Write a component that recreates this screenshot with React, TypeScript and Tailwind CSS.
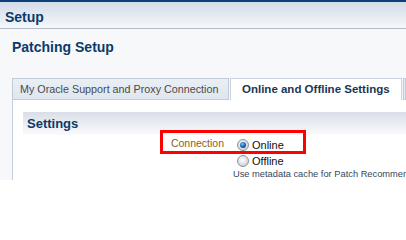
import React from 'react';

const Radio: React.FC<{ checked?: boolean }> = ({ checked }) => (
  <svg width="12" height="12" viewBox="0 0 12 12" className="shrink-0">
    <defs>
      <radialGradient id={checked ? 'rOn' : 'rOff'} cx="45%" cy="40%" r="60%">
        <stop offset="0%" stopColor="#ffffff" />
        <stop offset="100%" stopColor="#c9ced6" />
      </radialGradient>
      <radialGradient id="dot" cx="40%" cy="35%" r="70%">
        <stop offset="0%" stopColor="#7fc4ef" />
        <stop offset="60%" stopColor="#1b6fb3" />
        <stop offset="100%" stopColor="#0b3d70" />
      </radialGradient>
    </defs>
    <circle cx="6" cy="6" r="5.5" fill={checked ? 'url(#rOn)' : 'url(#rOff)'} stroke="#8d949e" strokeWidth="1" />
    {checked && <circle cx="6" cy="6" r="3" fill="url(#dot)" />}
  </svg>
);

const App: React.FC = () => {
  return (
    <div
      className="relative w-[406px] h-[216px] overflow-hidden bg-white"
      style={{ fontFamily: '"Liberation Sans", Arial, sans-serif' }}
    >
      {/* page header */}
      <div className="h-[29px] border-t-2 border-t-[#0d3f7a] border-b border-b-[#b4bdca] bg-gradient-to-b from-[#d3dce9] to-[#f5f7fa] pl-[5px] pt-[5px] text-[14px] leading-[21px] font-bold text-[#0c3a6a]">
        Setup
      </div>

      <div className="h-[151px] bg-[#f7f8fa] pt-[8px]">
        <div className="pl-[12px] text-[14px] leading-[20px] font-bold text-[#0c3a6a]">Patching Setup</div>

        {/* tabs */}
        <div className="mt-[21px] flex h-[22px] pl-[12px] whitespace-nowrap">
          <div className="w-[217px] shrink-0 border border-[#c2ccd9] bg-gradient-to-b from-[#eaeff5] to-[#dfe6ef] pl-[7px] text-[10.75px] leading-[20px] text-[#4a4a4a]">
            My Oracle Support and Proxy Connection
          </div>
          <div className="ml-px w-[172px] shrink-0 border border-b-0 border-[#c9d2dd] bg-white pl-[11px] text-[11.5px] leading-[20px] font-bold text-[#1c3553]">
            Online and Offline Settings
          </div>
          <div className="ml-px flex-1 border border-[#c2ccd9] bg-[#e3e9f1]" />
        </div>

        {/* panel */}
        <div className="ml-[12px] h-[80px] border-l border-[#c5cfdc] bg-white pt-[12px]">
          <div className="ml-[10px] h-[23px] bg-gradient-to-b from-[#d9dee8] to-[#fafbfc] pl-[4px] text-[13px] leading-[23px] font-bold text-[#0b3b66]">
            Settings
          </div>
          <div className="mt-[2px] flex whitespace-nowrap">
            <div className="w-[211px] shrink-0 text-right text-[10.5px] leading-[13px] text-[#8b5f1a]">Connection</div>
            <div className="ml-[13px] flex shrink-0 flex-col">
              <div className="flex h-[16px] items-center gap-[3px] text-[11px] text-[#111]">
                <Radio checked />
                <span>Online</span>
              </div>
              <div className="flex h-[16px] items-center gap-[3px] text-[11px] text-[#111]">
                <Radio />
                <span>Offline</span>
              </div>
              <div className="-ml-[4px] text-[9.3px] leading-[10px] text-[#34475c]">
                Use metadata cache for Patch Recommendations
              </div>
            </div>
          </div>
        </div>
      </div>

      {/* annotation box */}
      <div className="absolute left-[160px] top-[130px] h-[24px] w-[146px] border-[3px] border-[#ff0000]" />
    </div>
  );
};

export default App;
